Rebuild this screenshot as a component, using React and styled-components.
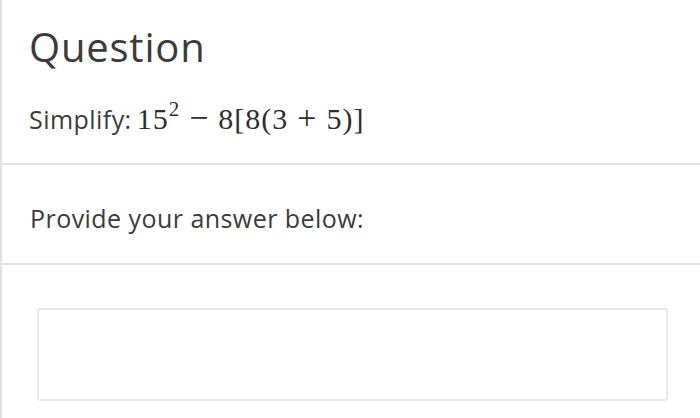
import styled, { createGlobalStyle } from "styled-components";

const GlobalStyle = createGlobalStyle`
  html, body {
    margin: 0;
    padding: 0;
    background: #fff;
  }
  body {
    font-family: "Open Sans", "Noto Sans", sans-serif;
    color: #3b3b3b;
  }
`;

const Page = styled.div`
  width: 700px;
  height: 418px;
  border-left: 2px solid #e2e2e2;
  box-sizing: border-box;
  overflow: hidden;
`;

const Section = styled.section`
  padding: ${(p) => p.$pad};
  border-bottom: ${(p) => (p.$last ? "none" : "2px solid #e2e2e2")};
  height: ${(p) => p.$height};
  box-sizing: border-box;
`;

const Heading = styled.h2`
  margin: 0;
  font-size: 40px;
  font-weight: 400;
  line-height: 1.2;
  letter-spacing: 0.8px;
`;

const Prompt = styled.p`
  margin: ${(p) => p.$top || "0"} 0 0;
  font-size: 25px;
  letter-spacing: 0.45px;
  line-height: 1.4;
  display: flex;
  align-items: baseline;
  gap: 5px;
`;

const Math = styled.span`
  font-family: "Liberation Serif", "DejaVu Serif", serif;
  font-size: 30px;
  letter-spacing: 1px;
  color: #2e2e2e;
`;

const Sup = styled.sup`
  font-size: 21px;
  vertical-align: 13px;
  line-height: 0;
`;

const Op = styled.span`
  font-size: 34px;
  line-height: 0;
  margin: 0 9px;
`;

const AnswerBox = styled.textarea`
  display: block;
  width: 631px;
  height: 93px;
  box-sizing: border-box;
  border: 2px solid #e9e9e9;
  border-radius: 3px;
  resize: none;
  outline: none;
  font: inherit;
`;

export default function App() {
  return (
    <>
      <GlobalStyle />
      <Page>
        <Section $pad="23px 27px 0" $height="165px">
          <Heading>Question</Heading>
          <Prompt $top="27px">
            <span>Simplify:</span>
            <Math>
              15<Sup>2</Sup>
              <Op>−</Op>8[8(3<Op>+</Op>5)]
            </Math>
          </Prompt>
        </Section>
        <Section $pad="36px 28px 0" $height="100px">
          <Prompt>Provide your answer below:</Prompt>
        </Section>
        <Section $pad="43px 0 0 35px" $last>
          <AnswerBox aria-label="answer" />
        </Section>
      </Page>
    </>
  );
}
